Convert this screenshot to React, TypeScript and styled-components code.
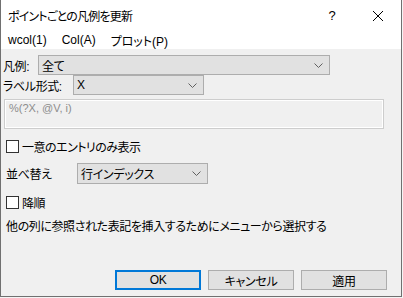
import React from "react";
import styled, { createGlobalStyle } from "styled-components";

const Global = createGlobalStyle`
  html, body { margin: 0; padding: 0; background: #f4f4f4; }
  body { width: 403px; height: 298px; overflow: hidden; }
  * { box-sizing: border-box; }
`;

const FONT = `"Liberation Sans", "Noto Sans CJK JP", sans-serif`;

const Window = styled.div`
  width: 402px;
  height: 297px;
  border-left: 1px solid #707070;
  border-right: 1px solid #707070;
  border-bottom: 1px solid #707070;
  background: #f0f0f0;
  display: flex;
  flex-direction: column;
  font-family: ${FONT};
  font-size: 12px;
  color: #000;
  font-feature-settings: "palt";
`;

const TitleBar = styled.div`
  height: 31px;
  background: #fff;
  display: flex;
  align-items: center;
`;

const Title = styled.div`
  flex: 1;
  padding-left: 7px;
  font-size: 12px;
  letter-spacing: -0.8px;
`;

const CaptionButton = styled.div`
  width: 46px;
  height: 31px;
  display: flex;
  align-items: center;
  justify-content: center;
  font-size: 13px;
`;

const MenuBar = styled.div`
  height: 18px;
  background: #fff;
  display: flex;
  align-items: center;
  padding-left: 7px;
  gap: 15px;
`;

const MenuItem = styled.span`
  font-size: 12px;
`;

const Client = styled.div`
  flex: 1;
  display: flex;
  flex-direction: column;
  padding: 6px 0 0 2px;
`;

const Row = styled.div<{ $mt?: number }>`
  display: flex;
  align-items: center;
  margin-top: ${(p) => p.$mt ?? 0}px;
`;

const Label = styled.span<{ $w: number; $pl?: number }>`
  width: ${(p) => p.$w}px;
  padding-left: ${(p) => p.$pl ?? 0}px;
  white-space: nowrap;
  letter-spacing: -0.4px;
`;

const Combo = styled.div<{ $w: number; $h?: number }>`
  width: ${(p) => p.$w}px;
  height: ${(p) => p.$h ?? 20}px;
  background: #e1e1e1;
  border: 1px solid #adadad;
  display: flex;
  align-items: center;
  padding-left: 3px;
  padding-right: 6px;
  justify-content: space-between;
`;

const ComboText = styled.span`
  letter-spacing: -0.3px;
`;

const TextArea = styled.div`
  width: 380px;
  height: 30px;
  margin-top: 4px;
  margin-left: 1px;
  border: 1px solid #cdcdcd;
  box-shadow: inset 0 0 0 1px #ffffff;
  color: #8c8c8c;
  font-size: 11px;
  padding: 2px 0 0 4px;
`;

const CheckRow = styled.label<{ $mt: number }>`
  display: flex;
  align-items: center;
  margin-top: ${(p) => p.$mt}px;
  padding-left: 3px;
  gap: 3px;
  letter-spacing: -0.5px;
`;

const Box = styled.span`
  width: 13px;
  height: 13px;
  border: 1px solid #333;
  background: #fff;
  display: inline-block;
`;

const HelpText = styled.div`
  margin-top: 6px;
  padding-left: 3px;
  letter-spacing: -0.4px;
  white-space: nowrap;
`;

const Footer = styled.div`
  margin-top: auto;
  display: flex;
  justify-content: flex-end;
  gap: 7px;
  padding: 0 14px 6px 0;
`;

const Button = styled.div<{ $default?: boolean }>`
  width: 86px;
  height: 20px;
  background: #e1e1e1;
  border: ${(p) => (p.$default ? "2px solid #0078d7" : "1px solid #adadad")};
  display: flex;
  align-items: center;
  justify-content: center;
  letter-spacing: -0.3px;
`;

const Chevron = () => (
  <svg width="9" height="5" viewBox="0 0 9 5">
    <path d="M0.5 0.5 L4.5 4.5 L8.5 0.5" fill="none" stroke="#606060" strokeWidth="1" />
  </svg>
);

const CloseIcon = () => (
  <svg width="10" height="10" viewBox="0 0 10 10">
    <path d="M0 0 L10 10 M10 0 L0 10" stroke="#000" strokeWidth="1" />
  </svg>
);

export default function App() {
  return (
    <>
      <Global />
      <Window>
        <TitleBar>
          <Title>ポイントごとの凡例を更新</Title>
          <CaptionButton>?</CaptionButton>
          <CaptionButton>
            <CloseIcon />
          </CaptionButton>
        </TitleBar>
        <MenuBar>
          <MenuItem>wcol(1)</MenuItem>
          <MenuItem>Col(A)</MenuItem>
          <MenuItem>プロット(P)</MenuItem>
        </MenuBar>
        <Client>
          <Row>
            <Label $w={35}>凡例:</Label>
            <Combo $w={292}>
              <ComboText>全て</ComboText>
              <Chevron />
            </Combo>
          </Row>
          <Row $mt={0}>
            <Label $w={70}>ラベル形式:</Label>
            <Combo $w={131}>
              <ComboText>X</ComboText>
              <Chevron />
            </Combo>
          </Row>
          <TextArea>%(?X, @V, i)</TextArea>
          <CheckRow $mt={9}>
            <Box />
            一意のエントリのみ表示
          </CheckRow>
          <Row $mt={8}>
            <Label $w={74} $pl={3}>並べ替え</Label>
            <Combo $w={131} $h={21}>
              <ComboText>行インデックス</ComboText>
              <Chevron />
            </Combo>
          </Row>
          <CheckRow $mt={10}>
            <Box />
            降順
          </CheckRow>
          <HelpText>他の列に参照された表記を挿入するためにメニューから選択する</HelpText>
          <Footer>
            <Button $default>OK</Button>
            <Button>キャンセル</Button>
            <Button>適用</Button>
          </Footer>
        </Client>
      </Window>
    </>
  );
}
